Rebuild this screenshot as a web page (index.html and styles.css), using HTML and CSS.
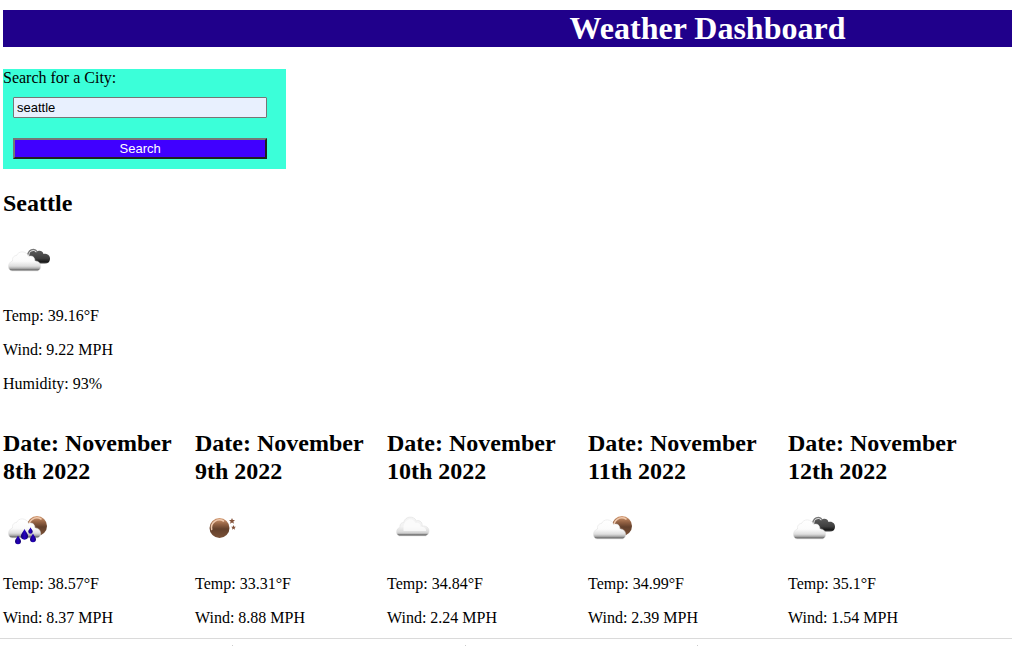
FILE: index.html
```html
<!DOCTYPE html>
<html lang="en">
<head>
  <meta charset="utf-8">
  <title>Weather Dashboard</title>
  <link rel="stylesheet" href="styles.css">
</head>
<body>
  <svg class="sprite" width="0" height="0" aria-hidden="true">
    <defs>
      <linearGradient id="white" gradientUnits="userSpaceOnUse" x1="0" y1="14.500" x2="0" y2="34">
        <stop offset="0" stop-color="#fff"/>
        <stop offset="0.5" stop-color="#fbfbfb"/>
        <stop offset="0.75" stop-color="#dedede"/>
        <stop offset="0.86" stop-color="#b0b0b0"/>
        <stop offset="0.93" stop-color="#777"/>
        <stop offset="1" stop-color="#a0a0a0"/>
      </linearGradient>
      <linearGradient id="pale" x1="0" y1="0" x2="0" y2="1">
        <stop offset="0" stop-color="#f4f4f4"/>
        <stop offset="0.5" stop-color="#f3f3f3"/>
        <stop offset="0.8" stop-color="#dadada"/>
        <stop offset="0.88" stop-color="#b8b8b8"/>
        <stop offset="0.94" stop-color="#666"/>
        <stop offset="1" stop-color="#999"/>
      </linearGradient>
      <linearGradient id="dark" x1="0" y1="0" x2="0" y2="1">
        <stop offset="0" stop-color="#5a5a5a"/>
        <stop offset="0.6" stop-color="#3e3e3e"/>
        <stop offset="0.85" stop-color="#1a1a1a"/>
        <stop offset="1" stop-color="#444"/>
      </linearGradient>
      <linearGradient id="brown" x1="0" y1="0" x2="0" y2="1">
        <stop offset="0" stop-color="#d59b72"/>
        <stop offset="0.3" stop-color="#956344"/>
        <stop offset="0.55" stop-color="#63402b"/>
        <stop offset="1" stop-color="#7b5238"/>
      </linearGradient>
      <linearGradient id="rain" x1="0" y1="0" x2="1" y2="0">
        <stop offset="0" stop-color="#12006c"/>
        <stop offset="0.5" stop-color="#2400c0"/>
        <stop offset="1" stop-color="#12006c"/>
      </linearGradient>
      <path id="cloud-shape" d="M9 34C4.500 33.500 4 25.500 9.500 24C9 19.500 12 18.500 13.500 18.500C15.500 13.500 23.500 13.500 25.500 19.500C29 18 32 20 32 24C38.500 23.500 39.500 33 34.500 34Z"/>
      <g id="cloud"><use href="#cloud-shape" fill="url(#white)" stroke="#dedede" stroke-width="0.500"/></g>
      <path id="drop" d="M0 -4.500C.800 -2.300 3 -.800 3 1.300A3 3 0 0 1 -3 1.300C-3 -.800 -.800 -2.300 0 -4.500Z" fill="url(#rain)"/>
      <path id="star" d="M0 -3L.900 -1L3 -.900L1.400 .600L1.900 2.700L0 1.500L-1.900 2.700L-1.400 .600L-3 -.900L-.900 -1Z" fill="#84523a"/>
      <g id="moon">
        <circle r="10" fill="url(#brown)"/>
        <path d="M-7.800 1.500A7.900 7.900 0 0 1 4 -7" fill="none" stroke="#efc8ac" stroke-width="1.500" stroke-linecap="round"/>
      </g>
      <g id="broken">
        <path d="M24.500 19C25 15.500 27 12.500 30.500 12.500C32.500 12.500 33.500 13.500 34.500 15" fill="none" stroke="#777" stroke-width="1.300"/>
        <path d="M26.500 16.500C28 13.500 31.500 13.500 33 15.500C35.500 12.800 39.500 13.500 40.500 17C44 15.800 47.300 18.500 47 22C46.800 25 45 26.500 42 26.500H32L26 20Z" fill="url(#dark)"/>
        <use href="#cloud"/>
      </g>
    </defs>
  </svg>

  <div class="page">
    <header class="banner"><h1 class="title">Weather Dashboard</h1></header>

    <form class="search">
      <label class="search-label" for="city">Search for a City:</label>
      <input class="field" id="city" type="text" value="seattle">
      <button class="submit" type="button">Search</button>
    </form>

    <main>
      <section class="report">
        <h2 class="heading">Seattle</h2>
        <svg class="icon" viewBox="0 0 50 50" role="img" aria-label="Broken clouds"><use href="#broken"/></svg>
        <p class="reading">Temp: 39.16°F</p>
        <p class="reading">Wind: 9.22 MPH</p>
        <p class="reading">Humidity: 93%</p>
      </section>

      <div class="forecast">
        <section class="report">
          <h2 class="heading">Date: November 8th 2022</h2>
          <svg class="icon" viewBox="0 0 50 50" role="img" aria-label="Rain">
            <use href="#moon" x="34" y="21"/>
            <use href="#cloud" y="-1"/>
            <use href="#drop" x="15" y="35"/>
            <g transform="translate(21.500 29.500) scale(1.200)"><use href="#drop"/></g>
            <g transform="translate(27.500 25.500) scale(.750)"><use href="#drop"/></g>
            <use href="#drop" x="30" y="33"/>
          </svg>
          <p class="reading">Temp: 38.57°F</p>
          <p class="reading">Wind: 8.37 MPH</p>
        </section>
        <section class="report">
          <h2 class="heading">Date: November 9th 2022</h2>
          <svg class="icon" viewBox="0 0 50 50" role="img" aria-label="Clear night">
            <use href="#moon" x="24.500" y="23"/>
            <use href="#star" x="37" y="16"/>
            <g transform="translate(38.500 22.500) scale(.800)"><use href="#star"/></g>
          </svg>
          <p class="reading">Temp: 33.31°F</p>
          <p class="reading">Wind: 8.88 MPH</p>
        </section>
        <section class="report">
          <h2 class="heading">Date: November 10th 2022</h2>
          <svg class="icon" viewBox="0 0 50 50" role="img" aria-label="Cloudy">
            <path d="M12.500 31C8.500 30 8.500 23.500 13 22.500C12.500 18.500 15 17.500 16.500 17.500C18.500 10.500 27 10.500 29.500 16C32.500 14.500 36 17.500 35 21C39 20.500 42 22.500 42 26C42 28.500 40.500 30.500 38.500 31Z" fill="url(#pale)" stroke="#ddd" stroke-width="0.500"/>
            <path d="M16.500 21C18 13 26 12 28.500 18C31.500 17 34 19 33.500 22C36 21.500 38 22.500 39 24.500V26H16.500Z" fill="#fcfcfc" fill-opacity="0.800"/>
          </svg>
          <p class="reading">Temp: 34.84°F</p>
          <p class="reading">Wind: 2.24 MPH</p>
        </section>
        <section class="report">
          <h2 class="heading">Date: November 11th 2022</h2>
          <svg class="icon" viewBox="0 0 50 50" role="img" aria-label="Partly cloudy">
            <use href="#moon" x="34" y="21"/>
            <use href="#cloud"/>
          </svg>
          <p class="reading">Temp: 34.99°F</p>
          <p class="reading">Wind: 2.39 MPH</p>
        </section>
        <section class="report">
          <h2 class="heading">Date: November 12th 2022</h2>
          <svg class="icon" viewBox="0 0 50 50" role="img" aria-label="Broken clouds"><use href="#broken"/></svg>
          <p class="reading">Temp: 35.1°F</p>
          <p class="reading">Wind: 1.54 MPH</p>
        </section>
      </div>
    </main>
  </div>

  <footer class="shelf">
    <span class="slot"></span><span class="slot"></span><span class="slot"></span>
  </footer>
</body>
</html>
```
FILE: styles.css
```css
body {
  margin: 0;
  padding-top: 10px;
  background: #fff;
  color: #000;
  font: 16px/18px "Liberation Serif", "Times New Roman", serif;
}

.sprite {
  position: absolute;
}

.page {
  margin-left: 3px;
}

.banner {
  padding-left: 400px;
  background: #20008b;
  color: #fff;
  text-align: center;
}

.title {
  margin: 0;
  font-size: 32px;
  line-height: 37px;
}

.search {
  display: flex;
  flex-direction: column;
  width: 28%;
  margin: 22px 0 20px;
  background: #3bffd9;
}

.field,
.submit {
  box-sizing: border-box;
  width: 90%;
  height: 21px;
  margin: 10px;
  font: 13px/15px "Liberation Sans", Arial, sans-serif;
}

.field {
  padding: 1px 3px;
  border: 1px solid #767676;
  border-radius: 1px;
  background: #e8f0fe;
  color: #000;
}

.submit {
  padding: 0;
  border: 2px solid;
  border-color: #767676 #212121 #212121 #767676;
  background: #4000ff;
  color: #fff;
}

.heading {
  margin: 0 0 20px;
  padding-right: 16px;
  font-size: 24px;
  line-height: 28px;
}

.icon {
  display: block;
  width: 50px;
  height: 50px;
  margin-bottom: 20px;
}

.reading {
  margin: 0 0 16px;
}

.forecast {
  display: grid;
  grid-template-columns: 192fr 192fr 201fr 200fr 224fr;
  margin-top: 36px;
}

.forecast .reading:last-child {
  margin-bottom: 11px;
}

.shelf {
  display: flex;
  padding-top: 6px;
  border-top: 1px solid #dadada;
}

.slot {
  box-sizing: border-box;
  width: 23%;
  height: 1px;
  border-right: 1px solid #ccc;
}
```
